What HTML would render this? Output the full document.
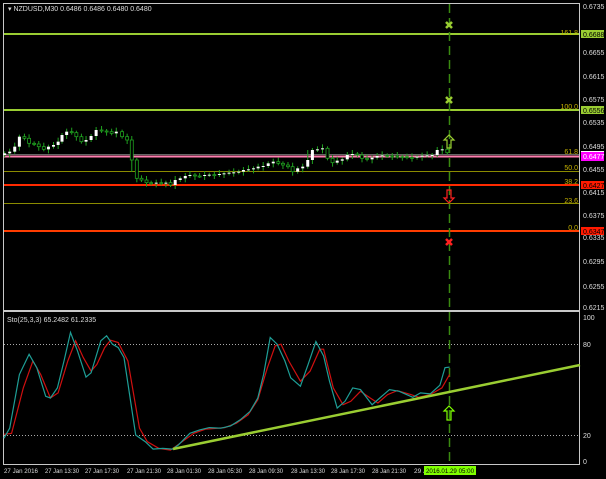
<!DOCTYPE html>
<html><head><meta charset="utf-8"><style>
html,body{margin:0;padding:0;background:#000;width:606px;height:479px;overflow:hidden}
svg{display:block;font-family:"Liberation Sans",sans-serif}
</style></head><body>
<svg width="606" height="479" viewBox="0 0 606 479" xmlns="http://www.w3.org/2000/svg">
<rect width="606" height="479" fill="#000"/>
<rect x="3.5" y="3.5" width="576" height="461" fill="none" stroke="#c8c8c8" stroke-width="1"/>
<rect x="3" y="310" width="577" height="2" fill="#c8c8c8"/>
<line x1="4" y1="34" x2="579" y2="34" stroke="#9acd32" stroke-width="2"/>
<line x1="4" y1="110" x2="579" y2="110" stroke="#9acd32" stroke-width="2"/>
<line x1="4" y1="154.5" x2="579" y2="154.5" stroke="#666" stroke-width="1"/>
<line x1="4" y1="156.5" x2="579" y2="156.5" stroke="#ff7fb0" stroke-width="2"/>
<line x1="4" y1="171.5" x2="579" y2="171.5" stroke="#8b8b00" stroke-width="1"/>
<line x1="4" y1="185" x2="579" y2="185" stroke="#ff2a00" stroke-width="2"/>
<line x1="4" y1="203.5" x2="579" y2="203.5" stroke="#8b8b00" stroke-width="1"/>
<line x1="4" y1="231" x2="579" y2="231" stroke="#ff3c00" stroke-width="2"/>
<g font-size="7" fill="#c8b400" text-anchor="end">
<text x="578" y="35">161.8</text><text x="578" y="109">100.0</text><text x="578" y="154">61.8</text>
<text x="578" y="170">50.0</text><text x="578" y="184">38.2</text><text x="578" y="203">23.6</text><text x="578" y="230">0.0</text>
</g>
<g id="candles"></g>
<text x="8" y="11" font-size="7" fill="#ddd">▾ NZDUSD,M30 0.6486 0.6486 0.6480 0.6480</text>
<line x1="449.5" y1="4" x2="449.5" y2="464" stroke="#3a8a10" stroke-width="1.5" stroke-dasharray="9,5"/>
<g stroke="#9acd32" stroke-width="2.5"><path d="M446 22l6 6M452 22l-6 6M446 97l6 6M452 97l-6 6"/></g>
<g stroke="#ff2020" stroke-width="2.5"><path d="M446 239l6 6M452 239l-6 6"/></g>
<path d="M449 135l-5 5h3v8h4v-8h3z" fill="none" stroke="#9acd32" stroke-width="1.2"/>
<path d="M449 203l-5-5h3v-8h4v8h3z" fill="none" stroke="#ff2020" stroke-width="1.2"/>
<path d="M449 406l-5 5h3v9h4v-9h3z" fill="none" stroke="#7fff00" stroke-width="1.2"/>
<line x1="4" y1="344.5" x2="579" y2="344.5" stroke="#aaa" stroke-dasharray="1,2"/>
<line x1="4" y1="435.5" x2="579" y2="435.5" stroke="#aaa" stroke-dasharray="1,2"/>
<text x="7" y="322" font-size="7" fill="#ddd">Sto(25,3,3) 65.2482 61.2335</text>
<g id="sto"></g>
<line x1="173" y1="449" x2="580" y2="365" stroke="#9acd32" stroke-width="2.5"/>
<g font-size="7" fill="#ddd">
<text x="583" y="9">0.6735</text><text x="583" y="55">0.6655</text><text x="583" y="79">0.6615</text>
<text x="583" y="102">0.6575</text><text x="583" y="125">0.6535</text><text x="583" y="149">0.6495</text>
<text x="583" y="172">0.6455</text><text x="583" y="195">0.6415</text><text x="583" y="218">0.6375</text>
<text x="583" y="240">0.6335</text><text x="583" y="264">0.6295</text><text x="583" y="289">0.6255</text>
<text x="583" y="310">0.6215</text>
<text x="583" y="320">100</text><text x="583" y="347">80</text><text x="583" y="438">20</text><text x="583" y="464">0</text>
</g>
<rect x="581" y="30" width="23" height="8" fill="#9acd32"/><text x="583" y="37" font-size="7" fill="#000">0.6688</text>
<rect x="581" y="106" width="23" height="8" fill="#9acd32"/><text x="583" y="113" font-size="7" fill="#000">0.6556</text>
<rect x="581" y="152" width="23" height="9" fill="#ff00ff"/><rect x="581" y="151" width="23" height="1" fill="#fff"/><text x="583" y="159" font-size="7" fill="#fff">0.6477</text>
<rect x="581" y="181" width="23" height="8" fill="#ff1a00"/><text x="583" y="188" font-size="7" fill="#000">0.6427</text>
<rect x="581" y="227" width="23" height="8" fill="#ff1a00"/><text x="583" y="234" font-size="7" fill="#000">0.6347</text>
<g font-size="6.5" fill="#ddd">
<text x="4" y="473" textLength="34" lengthAdjust="spacingAndGlyphs">27 Jan 2016</text>
<text x="45" y="473" textLength="34" lengthAdjust="spacingAndGlyphs">27 Jan 13:30</text>
<text x="85" y="473" textLength="34" lengthAdjust="spacingAndGlyphs">27 Jan 17:30</text>
<text x="127" y="473" textLength="34" lengthAdjust="spacingAndGlyphs">27 Jan 21:30</text>
<text x="167" y="473" textLength="34" lengthAdjust="spacingAndGlyphs">28 Jan 01:30</text>
<text x="208" y="473" textLength="34" lengthAdjust="spacingAndGlyphs">28 Jan 05:30</text>
<text x="249" y="473" textLength="34" lengthAdjust="spacingAndGlyphs">28 Jan 09:30</text>
<text x="291" y="473" textLength="34" lengthAdjust="spacingAndGlyphs">28 Jan 13:30</text>
<text x="331" y="473" textLength="34" lengthAdjust="spacingAndGlyphs">28 Jan 17:30</text>
<text x="372" y="473" textLength="34" lengthAdjust="spacingAndGlyphs">28 Jan 21:30</text>
<text x="414" y="473">29 J</text>
</g>
<rect x="424" y="466" width="52" height="9" fill="#7fff00"/><text x="426" y="473" font-size="6.5" fill="#000" textLength="48" lengthAdjust="spacingAndGlyphs">2016.01.29 05:00</text>
</svg>
<script>
(function(){
var c=[[12,460],[25,455],[38,440],[50,410],[63,415],[75,430],[88,432],[100,440],[113,448],[125,440],[138,435],[150,425],[160,405],[172,395],[185,398],[197,410],[210,425],[222,420],[235,408],[248,390],[262,393],[275,395],[288,400],[300,395],[315,410],[328,420],[340,480],[353,535],[365,540],[378,548],[390,550],[403,548],[416,550],[428,548],[440,555],[452,540],[465,535],[478,528],[490,525],[503,528],[515,528],[528,525],[540,524],[553,525],[566,522],[578,520],[591,518],[603,517],[616,515],[628,510],[641,508],[654,505],[666,500],[679,498],[692,490],[705,485],[718,490],[730,495],[743,500],[755,515],[768,505],[781,500],[794,480],[806,450],[819,448],[832,445],[845,475],[858,488],[870,482],[883,478],[896,465],[909,462],[922,465],[934,475],[947,478],[960,473],[973,468],[986,466],[999,468],[1012,468],[1025,470],[1038,470],[1050,472],[1063,473],[1076,470],[1089,467],[1102,466],[1115,465],[1128,450],[1141,448],[1154,458]];
var g=document.getElementById("candles"),h="";
for(var i=0;i<c.length;i++){
 var x=c[i][0]/2.58,yc=c[i][1]/3,yo=(i?c[i-1][1]:c[0][1]+5)/3;
 var top=Math.min(yo,yc),bot=Math.max(yo,yc);
 var wt=top-2-(i%3),wb=bot+2+(i%2)*2;
 if(i==26){wb=bot+12;} if(i==62){wt=top-10;}
 h+='<line x1="'+x+'" y1="'+wt+'" x2="'+x+'" y2="'+wb+'" stroke="#1fa01f" stroke-width="1"/>';
 var bh=Math.max(bot-top,1);
 if(yc<yo) h+='<rect x="'+(x-1.5)+'" y="'+top+'" width="3" height="'+bh+'" fill="#fff"/>';
 else h+='<rect x="'+(x-1.5)+'" y="'+top+'" width="3" height="'+bh+'" fill="#000" stroke="#1fa01f" stroke-width="0.8"/>';
}
g.innerHTML=h;
function pl(a,col){var s="";for(var i=0;i<a.length;i+=2)s+=(a[i]/2.58).toFixed(1)+","+(240+a[i+1]/2.975).toFixed(1)+" ";return '<polyline points="'+s+'" fill="none" stroke="'+col+'" stroke-width="1.2"/>';}
var t=[10,590,25,560,50,400,75,340,95,380,118,465,130,470,148,440,165,360,182,275,200,330,222,408,235,395,260,300,275,285,290,310,305,320,320,350,350,580,375,600,395,622,420,620,445,622,460,610,490,575,515,565,540,558,570,560,595,553,620,535,645,510,665,470,680,400,697,290,715,310,735,360,750,410,775,435,795,370,815,302,835,345,850,420,870,500,890,480,910,440,930,445,960,490,980,470,1005,445,1030,450,1065,468,1085,455,1110,458,1135,432,1148,380,1160,378];
var r=[10,578,30,575,60,440,85,360,105,400,130,470,150,455,175,360,195,300,215,350,235,390,250,370,270,320,285,298,305,305,330,360,360,560,380,600,410,620,440,625,470,600,500,575,530,563,580,558,610,545,640,520,665,475,690,380,710,315,725,310,745,360,775,420,800,390,825,325,835,325,860,440,885,490,905,480,930,450,955,470,975,485,1000,460,1025,448,1060,460,1080,468,1110,460,1140,440,1160,400];
document.getElementById("sto").innerHTML=pl(r,"#d01010")+pl(t,"#1e9e96");
})();
</script>
</body></html>
